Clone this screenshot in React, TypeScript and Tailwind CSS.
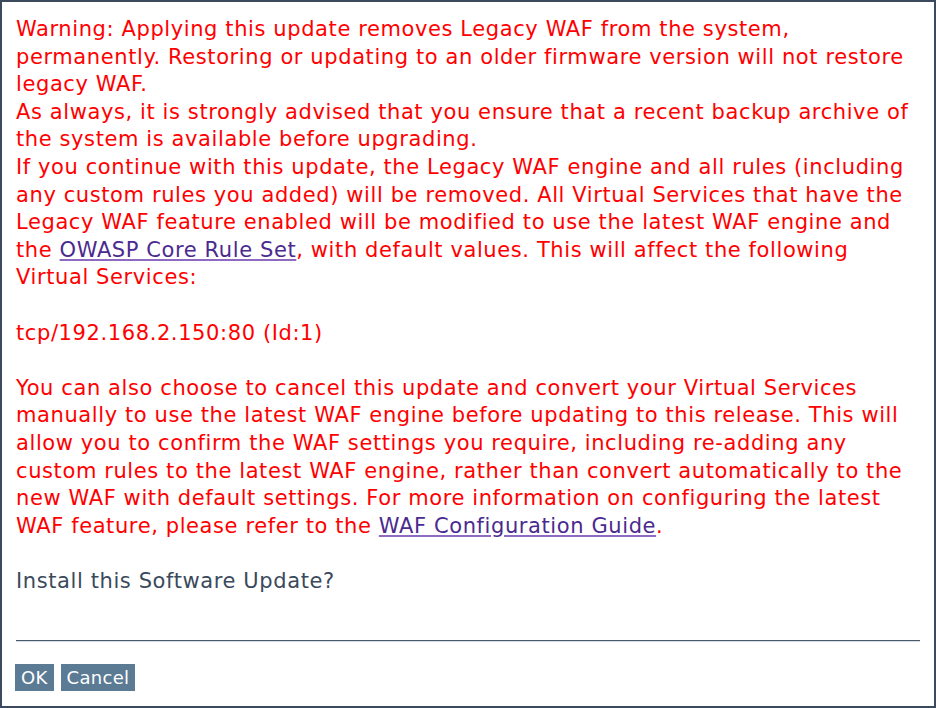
import React from 'react';

const Link: React.FC<{ children: React.ReactNode }> = ({ children }) => (
  <a href="#" className="text-[#4b2a8f] underline decoration-[#8c6bc0] underline-offset-2">
    {children}
  </a>
);

export default function App() {
  const red = [
    'Warning: Applying this update removes Legacy WAF from the system,',
    'permanently. Restoring or updating to an older firmware version will not restore',
    'legacy WAF.',
    'As always, it is strongly advised that you ensure that a recent backup archive of',
    'the system is available before upgrading.',
    'If you continue with this update, the Legacy WAF engine and all rules (including',
    'any custom rules you added) will be removed. All Virtual Services that have the',
    'Legacy WAF feature enabled will be modified to use the latest WAF engine and',
  ];

  return (
    <div
      className="w-[936px] h-[708px] border-2 border-[#3b4a5c] bg-white flex flex-col overflow-hidden"
      style={{ fontFamily: '"DejaVu Sans", "Open Sans", sans-serif' }}
    >
      <div className="px-[14px] pt-[14px] text-[21px] tracking-[0.6px] leading-[27.6px] text-[#ff0000] whitespace-nowrap">
        {red.map((l) => (
          <div key={l}>{l}</div>
        ))}
        <div>
          the <Link>OWASP Core Rule Set</Link>, with default values. This will affect the following
        </div>
        <div>Virtual Services:</div>
        <div>&nbsp;</div>
        <div>tcp/192.168.2.150:80 (Id:1)</div>
        <div>&nbsp;</div>
        <div>You can also choose to cancel this update and convert your Virtual Services</div>
        <div>manually to use the latest WAF engine before updating to this release. This will</div>
        <div>allow you to confirm the WAF settings you require, including re-adding any</div>
        <div>custom rules to the latest WAF engine, rather than convert automatically to the</div>
        <div>new WAF with default settings. For more information on configuring the latest</div>
        <div>
          WAF feature, please refer to the <Link>WAF Configuration Guide</Link>.
        </div>
        <div>&nbsp;</div>
        <div className="text-[#3a4a5c]">Install this Software Update?</div>
      </div>
      <div className="mx-[14px] mt-[45px] border-t border-[#4a5a6e] border-b-[1px] border-b-[#d6dbe1]" />
      <div className="flex gap-[7px] px-[13px] mt-[22px]">
        <button className="bg-[#5b7a94] text-white text-[18px] tracking-[0.3px] leading-[27px] px-[6px]">OK</button>
        <button className="bg-[#5b7a94] text-white text-[18px] tracking-[0.3px] leading-[27px] px-[6px]">Cancel</button>
      </div>
    </div>
  );
}
